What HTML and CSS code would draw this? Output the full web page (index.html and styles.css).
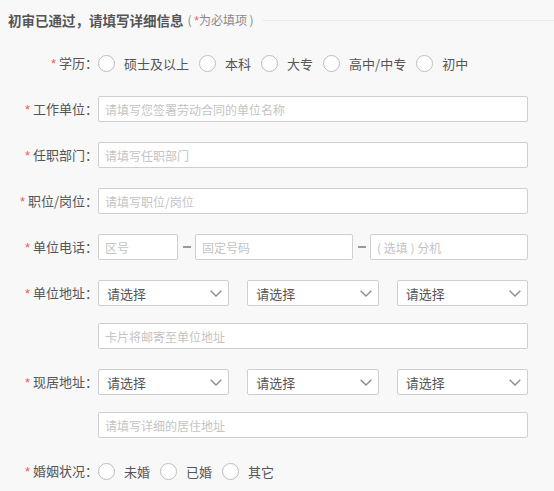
FILE: index.html
```html
<!DOCTYPE html>
<html lang="zh-CN">
<head>
<meta charset="utf-8">
<title>详细信息</title>
<link rel="stylesheet" href="styles.css">
</head>
<body>
<div class="page">
  <div class="title">
    <h2 class="title-text">初审已通过，请填写详细信息</h2>
    <span class="title-note">( <i class="req">*</i>为必填项 )</span>
    <span class="title-line"></span>
  </div>

  <div class="row">
    <label class="lbl"><i class="req">*</i> 学历<span class="colon">：</span></label>
    <div class="field radios">
      <span class="opt"><span class="radio"></span>硕士及以上</span>
      <span class="opt"><span class="radio"></span>本科</span>
      <span class="opt"><span class="radio"></span>大专</span>
      <span class="opt"><span class="radio"></span>高中/中专</span>
      <span class="opt"><span class="radio"></span>初中</span>
    </div>
  </div>

  <div class="row">
    <label class="lbl"><i class="req">*</i> 工作单位<span class="colon">：</span></label>
    <div class="field"><input class="inp" placeholder="请填写您签署劳动合同的单位名称"></div>
  </div>

  <div class="row">
    <label class="lbl"><i class="req">*</i> 任职部门<span class="colon">：</span></label>
    <div class="field"><input class="inp" placeholder="请填写任职部门"></div>
  </div>

  <div class="row">
    <label class="lbl"><i class="req">*</i> 职位/岗位<span class="colon">：</span></label>
    <div class="field"><input class="inp" placeholder="请填写职位/岗位"></div>
  </div>

  <div class="row">
    <label class="lbl"><i class="req">*</i> 单位电话<span class="colon">：</span></label>
    <div class="field phone">
      <input class="inp area" placeholder="区号">
      <span class="dash"></span>
      <input class="inp" placeholder="固定号码">
      <span class="dash"></span>
      <input class="inp" placeholder="( 选填 ) 分机">
    </div>
  </div>

  <div class="row row-tight">
    <label class="lbl"><i class="req">*</i> 单位地址<span class="colon">：</span></label>
    <div class="field selects">
      <div class="sel">请选择<svg class="chev" viewBox="0 0 12 7"><polyline points="0.7,0.7 6,6 11.3,0.7"/></svg></div>
      <div class="sel">请选择<svg class="chev" viewBox="0 0 12 7"><polyline points="0.7,0.7 6,6 11.3,0.7"/></svg></div>
      <div class="sel">请选择<svg class="chev" viewBox="0 0 12 7"><polyline points="0.7,0.7 6,6 11.3,0.7"/></svg></div>
    </div>
  </div>
  <div class="row">
    <span class="lbl"></span>
    <div class="field"><input class="inp" placeholder="卡片将邮寄至单位地址"></div>
  </div>

  <div class="row row-tight">
    <label class="lbl"><i class="req">*</i> 现居地址<span class="colon">：</span></label>
    <div class="field selects">
      <div class="sel">请选择<svg class="chev" viewBox="0 0 12 7"><polyline points="0.7,0.7 6,6 11.3,0.7"/></svg></div>
      <div class="sel">请选择<svg class="chev" viewBox="0 0 12 7"><polyline points="0.7,0.7 6,6 11.3,0.7"/></svg></div>
      <div class="sel">请选择<svg class="chev" viewBox="0 0 12 7"><polyline points="0.7,0.7 6,6 11.3,0.7"/></svg></div>
    </div>
  </div>
  <div class="row">
    <span class="lbl"></span>
    <div class="field"><input class="inp" placeholder="请填写详细的居住地址"></div>
  </div>

  <div class="row">
    <label class="lbl"><i class="req">*</i> 婚姻状况<span class="colon">：</span></label>
    <div class="field radios">
      <span class="opt"><span class="radio"></span>未婚</span>
      <span class="opt"><span class="radio"></span>已婚</span>
      <span class="opt"><span class="radio"></span>其它</span>
    </div>
  </div>
</div>
</body>
</html>
```

FILE: styles.css
```css
* { box-sizing: border-box; }
html, body {
  margin: 0;
  padding: 0;
  background: #f8f8f8;
}
body {
  font-family: "Noto Sans CJK SC", "Microsoft YaHei", sans-serif;
  color: #555;
  width: 554px;
  height: 491px;
  overflow: hidden;
}
.page {
  padding-top: 10px;
}
.title {
  display: flex;
  align-items: center;
  height: 20px;
  padding-left: 8px;
  margin-bottom: 20px;
}
.title-text {
  margin: 0;
  font-size: 13.5px;
  font-weight: bold;
  color: #555;
  line-height: 20px;
}
.title-note {
  font-size: 12px;
  color: #888;
  line-height: 20px;
  margin-left: 4px;
  white-space: pre;
}
.title-line {
  flex: 1;
  height: 1px;
  background: #ebebeb;
  margin-left: 8px;
}
.req {
  font-style: normal;
  color: #f05a5a;
  font-family: "Liberation Sans", Arial, sans-serif;
  line-height: 1;
}
.row {
  display: flex;
  align-items: center;
  height: 26px;
  margin-bottom: 20px;
}
.row-tight {
  margin-bottom: 17px;
}
.lbl {
  width: 98px;
  height: 26px;
  flex: none;
  text-align: right;
  font-size: 13px;
  line-height: 26px;
  color: #555;
  white-space: nowrap;
}
.colon {
  font-family: "Noto Sans CJK TC", "Noto Sans CJK SC", sans-serif;
}
.field {
  width: 430px;
  flex: none;
}
.inp {
  display: block;
  width: 100%;
  height: 26px;
  border: 1px solid #cfcfcf;
  border-radius: 2px;
  background: #fff;
  padding: 0 6px;
  font-family: inherit;
  font-size: 12px;
  color: #555;
  outline: none;
}
.inp::placeholder {
  color: #c4c4c4;
}
.radios {
  display: flex;
  align-items: center;
  font-size: 13px;
  height: 26px;
}
.opt {
  display: flex;
  align-items: center;
  margin-right: 10px;
  height: 26px;
}
.radio {
  width: 17px;
  height: 17px;
  border: 1px solid #bdbdbd;
  border-radius: 50%;
  background: #fff;
  margin-right: 9px;
  flex: none;
}
.phone {
  display: flex;
  align-items: center;
}
.phone .inp {
  flex: 1;
  width: auto;
  min-width: 0;
}
.phone .inp.area {
  flex: none;
  width: 80px;
}
.dash {
  flex: none;
  width: 8px;
  height: 2px;
  background: #999;
  margin: 0 4px 0 5px;
}
.selects {
  display: flex;
  gap: 18px;
}
.sel {
  flex: 1;
  height: 26px;
  border: 1px solid #cfcfcf;
  border-radius: 2px;
  background: #fff;
  display: flex;
  align-items: center;
  justify-content: space-between;
  padding: 0 6px 0 8px;
  font-size: 13px;
  color: #555;
}
.chev {
  width: 12px;
  height: 7px;
  fill: none;
  stroke: #8a8a8a;
  stroke-width: 1.3;
}
```
